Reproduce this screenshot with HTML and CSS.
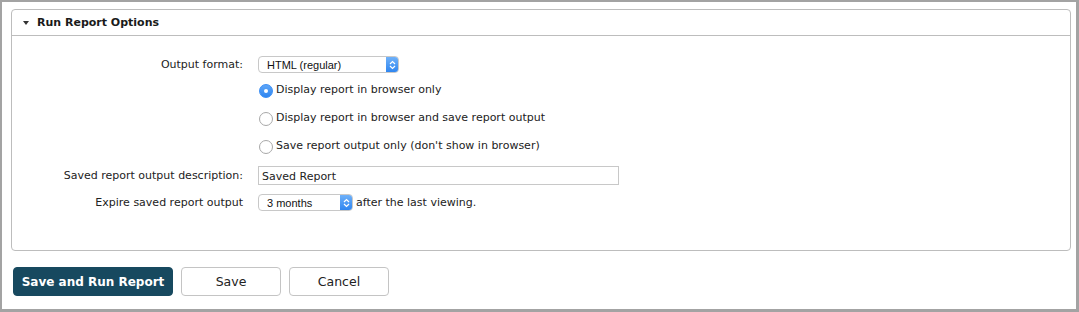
FILE: index.html
```html
<!DOCTYPE html>
<html>
<head>
<meta charset="utf-8">
<link rel="stylesheet" href="styles.css">
</head>
<body>
<div class="frame">
  <div class="panel">
    <div class="panel-head">
      <span class="caret"></span>
      <span class="panel-title">Run Report Options</span>
    </div>
    <div class="panel-body">
      <div class="row row-format">
        <div class="label">Output format:</div>
        <div class="control">
          <div class="select select-format"><span class="select-text">HTML (regular)</span><span class="stepper"><svg width="7" height="10" viewBox="0 0 7 10"><path d="M1 4 L3.5 1.5 L6 4 M1 6 L3.5 8.5 L6 6" fill="none" stroke="#fff" stroke-width="1.2"/></svg></span></div>
        </div>
      </div>
      <div class="radios">
        <label class="radio-row"><span class="radio checked"></span>Display report in browser only</label>
        <label class="radio-row"><span class="radio"></span>Display report in browser and save report output</label>
        <label class="radio-row"><span class="radio"></span>Save report output only (don't show in browser)</label>
      </div>
      <div class="row row-desc">
        <div class="label">Saved report output description:</div>
        <div class="control">
          <div class="input">Saved Report</div>
        </div>
      </div>
      <div class="row row-expire">
        <div class="label">Expire saved report output</div>
        <div class="control">
          <div class="select select-expire"><span class="select-text">3 months</span><span class="stepper"><svg width="7" height="10" viewBox="0 0 7 10"><path d="M1 4 L3.5 1.5 L6 4 M1 6 L3.5 8.5 L6 6" fill="none" stroke="#fff" stroke-width="1.2"/></svg></span></div>
          <span class="after">after the last viewing.</span>
        </div>
      </div>
    </div>
  </div>
  <div class="buttons">
    <button class="btn btn-primary">Save and Run Report</button>
    <button class="btn">Save</button>
    <button class="btn">Cancel</button>
  </div>
</div>
</body>
</html>
```

FILE: styles.css
```css
* { box-sizing: border-box; }
html, body { margin: 0; padding: 0; background: #fff; }
body {
  font-family: "DejaVu Sans", Verdana, sans-serif;
  font-size: 11px;
  color: #222;
}
.frame {
  width: 1079px;
  height: 312px;
  border-style: solid;
  border-color: #a3a3a3;
  border-width: 2px 3px 3px 2px;
  padding: 7px 5px 0 9px;
  background: #fff;
}
.panel {
  border: 1px solid #bdbdbd;
  border-radius: 4px;
  height: 242px;
}
.panel-head {
  height: 26px;
  border-bottom: 1px solid #bdbdbd;
  display: flex;
  align-items: center;
  padding-left: 11px;
}
.caret {
  width: 0; height: 0;
  border-left: 3.5px solid transparent;
  border-right: 3.5px solid transparent;
  border-top: 4px solid #333;
  margin-right: 8px;
}
.panel-title {
  font-weight: bold;
  font-size: 11px;
  color: #1a1a1a;
}
.panel-body {
  padding-top: 20px;
}
.row {
  display: flex;
  align-items: center;
}
.label {
  width: 231px;
  text-align: right;
  margin-right: 15px;
}
.control {
  display: flex;
  align-items: center;
}
.select {
  height: 17px;
  border: 1px solid #c8c8c8;
  border-radius: 4px;
  background: #fff;
  display: flex;
  align-items: center;
  overflow: hidden;
  font-family: "Liberation Sans", Arial, sans-serif;
  font-size: 11px;
  color: #111;
}
.select-format { width: 141px; }
.select-expire { width: 95px; }
.select-text { flex: 1; padding-left: 8px; }
.stepper {
  width: 12px;
  height: 100%;
  background: linear-gradient(#6fb1f9, #2f86f0);
  display: flex;
  align-items: center;
  justify-content: center;
}
.radios {
  padding-left: 247px;
  margin-top: 2px;
}
.radio-row {
  display: flex;
  align-items: center;
  height: 28px;
}
.radio {
  width: 14px; height: 14px;
  border-radius: 50%;
  border: 1px solid #a8a8a8;
  background: #fff;
  margin: 4px 3px 0 0;
  position: relative;
}
.radio.checked {
  border-color: #3a8ef5;
  background: linear-gradient(#5ea6f8, #2f86f0);
}
.radio.checked::after {
  content: "";
  position: absolute;
  width: 4px; height: 4px;
  border-radius: 50%;
  background: #fff;
  left: 4px; top: 4px;
}
.row-desc { margin-top: 7px; }
.input {
  width: 361px;
  height: 19px;
  border: 1px solid #c8c8c8;
  padding: 1px 0 0 3px;
  font-size: 11px;
  display: flex;
  align-items: center;
}
.row-expire { margin-top: 9px; }
.after { margin-left: 3px; }
.buttons {
  display: flex;
  gap: 8px;
  padding-left: 2px;
  margin-top: 16px;
}
.btn {
  height: 29px;
  width: 100px;
  border: 1px solid #c4c4c4;
  border-radius: 4px;
  background: #fff;
  font-family: "DejaVu Sans", Verdana, sans-serif;
  font-size: 12.5px;
  color: #222;
  padding: 0;
}
.btn-primary {
  width: 160px;
  background: #17495f;
  border-color: #17495f;
  color: #fff;
  font-weight: bold;
  font-size: 12px;
}
```
